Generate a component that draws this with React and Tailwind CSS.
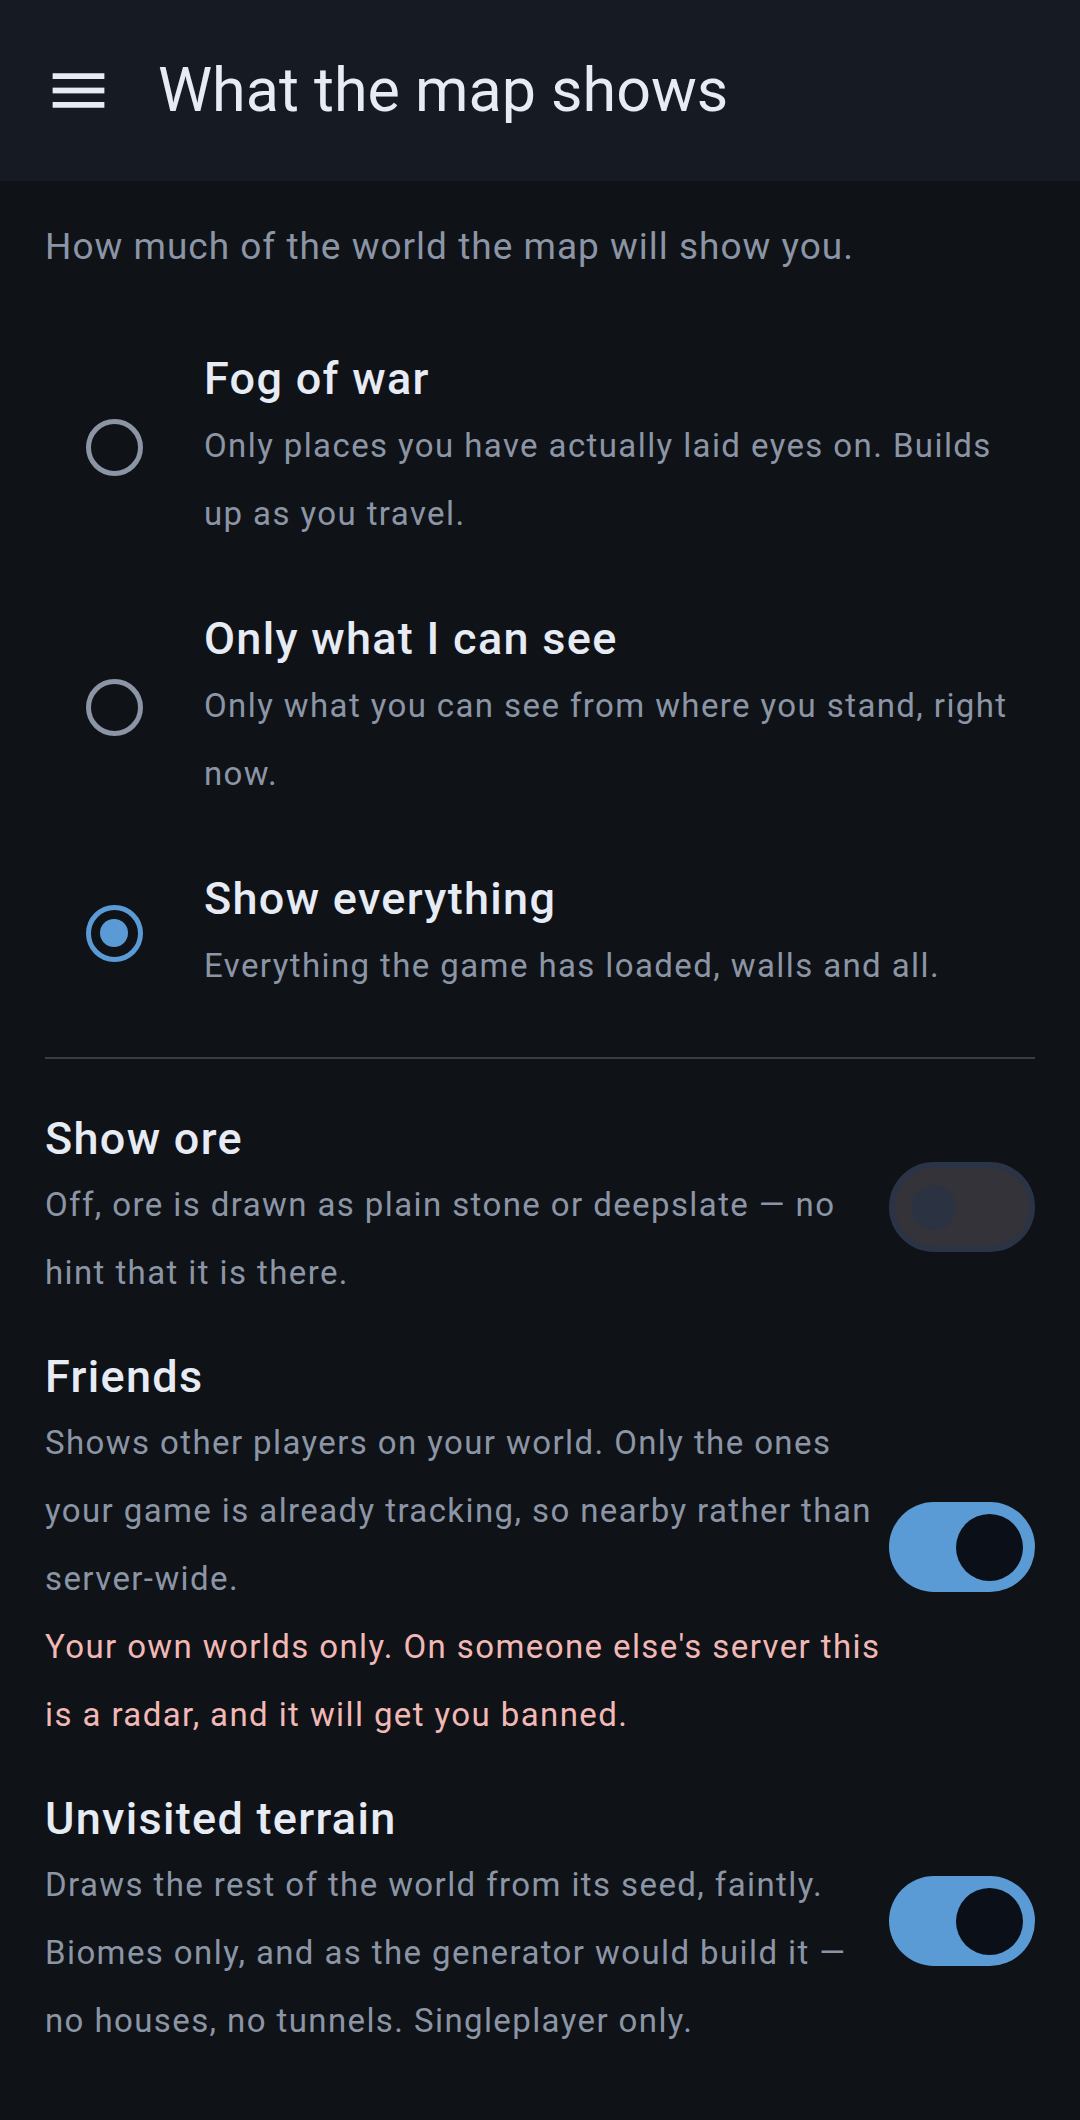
import React from "react";

function Radio({ selected }) {
  if (selected) {
    return (
      <div className="w-[57px] h-[57px] rounded-full border-[5.5px] border-[#5b9bd5] flex items-center justify-center">
        <div className="w-[28px] h-[28px] rounded-full bg-[#5b9bd5]" />
      </div>
    );
  }
  return <div className="w-[57px] h-[57px] rounded-full border-[5.5px] border-[#8b95a5]" />;
}

function Toggle({ on }) {
  if (on) {
    return (
      <div className="w-[146px] h-[90px] rounded-full bg-[#5b9bd5] flex items-center justify-end pr-[12px] shrink-0">
        <div className="w-[67px] h-[67px] rounded-full bg-[#0b0f17]" />
      </div>
    );
  }
  return (
    <div className="w-[146px] h-[90px] rounded-full bg-[#343339] border-[6px] border-[#2b3445] flex items-center pl-[16px] shrink-0">
      <div className="w-[45px] h-[45px] rounded-full bg-[#2b3342]" />
    </div>
  );
}

function RadioItem({ title, desc, selected }) {
  return (
    <div className="flex items-center py-[29px]">
      <div className="w-[138px] flex justify-center shrink-0">
        <Radio selected={selected} />
      </div>
      <div className="ml-[21px] flex-1">
        <div className="text-[45px] leading-[66px] font-medium text-[#e6ebf4] tracking-[1.3px]">{title}</div>
        <div className="text-[33px] leading-[68px] text-[#8b95a5] tracking-[1.4px]">{desc}</div>
      </div>
    </div>
  );
}

function ToggleRow({ title, desc, warn, on }) {
  return (
    <div className="flex items-center py-[19px]">
      <div className="flex-1">
        <div className="text-[45px] leading-[64px] font-medium text-[#e6ebf4] tracking-[1.3px]">{title}</div>
        <div className="text-[33px] leading-[68px] text-[#8b95a5] tracking-[1.4px]">{desc}</div>
        {warn && <div className="text-[33px] leading-[68px] text-[#f2b8b5] tracking-[1.4px]">{warn}</div>}
      </div>
      <Toggle on={on} />
    </div>
  );
}

export default function App() {
  return (
    <div className="min-h-[2120px] bg-[#0f1217] font-['Roboto',sans-serif]">
      <header className="h-[181px] bg-[#151a23] flex items-center pl-[44px]">
        <svg width="69" height="69" viewBox="0 0 24 24" fill="#e6ebf4">
          <rect x="3" y="6" width="18" height="2" />
          <rect x="3" y="11" width="18" height="2" />
          <rect x="3" y="16" width="18" height="2" />
        </svg>
        <h1 className="ml-[45px] text-[61px] text-[#e6ebf4] leading-none">What the map shows</h1>
      </header>
      <main className="px-[45px]">
        <p className="pt-[32px] text-[37px] leading-[68px] text-[#8b95a5] tracking-[1px]">
          How much of the world the map will show you.
        </p>
        <div className="mt-[36px]">
          <RadioItem title="Fog of war" desc="Only places you have actually laid eyes on. Builds up as you travel." />
          <RadioItem title="Only what I can see" desc="Only what you can see from where you stand, right now." />
          <RadioItem title="Show everything" desc="Everything the game has loaded, walls and all." selected />
        </div>
        <div className="mt-[28px] mb-[29px] h-[2px] bg-[#3c3b41]" />
        <ToggleRow
          title="Show ore"
          desc="Off, ore is drawn as plain stone or deepslate — no hint that it is there."
        />
        <ToggleRow
          title="Friends"
          desc="Shows other players on your world. Only the ones your game is already tracking, so nearby rather than server-wide."
          warn="Your own worlds only. On someone else's server this is a radar, and it will get you banned."
          on
        />
        <ToggleRow
          title="Unvisited terrain"
          desc="Draws the rest of the world from its seed, faintly. Biomes only, and as the generator would build it — no houses, no tunnels. Singleplayer only."
          on
        />
      </main>
    </div>
  );
}
